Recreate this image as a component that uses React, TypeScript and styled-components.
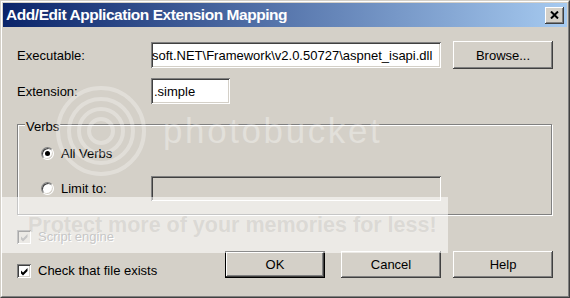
import React from "react";
import styled, { createGlobalStyle, css } from "styled-components";

const GlobalStyle = createGlobalStyle`
  html, body { margin: 0; padding: 0; background: #D4D0C8; }
  * { box-sizing: border-box; }
`;

const UI_FONT = `"Liberation Sans", Arial, sans-serif`;

const Window = styled.div`
  position: relative;
  width: 570px;
  height: 298px;
  background: #D4D0C8;
  border: 1px solid;
  border-color: #D4D0C8 #404040 #404040 #D4D0C8;
  font-family: ${UI_FONT};
  font-size: 13px;
  color: #000;
  overflow: hidden;
`;

const Frame = styled.div`
  height: 100%;
  border: 1px solid;
  border-color: #fff #808080 #808080 #fff;
  padding: 1px;
  display: flex;
  flex-direction: column;
`;

const TitleBar = styled.div`
  height: 24px;
  flex: none;
  display: flex;
  align-items: center;
  justify-content: space-between;
  padding: 0 3px 0 3px;
  background: linear-gradient(to right, #0A246A, #A6CAF0);
`;

const Title = styled.span`
  color: #fff;
  font-family: ${UI_FONT};
  font-weight: bold;
  font-size: 15.5px;
  letter-spacing: -0.45px;
  white-space: nowrap;
`;

const CaptionButton = styled.button`
  width: 19px;
  height: 17px;
  padding: 0;
  border: none;
  background: #D4D0C8;
  display: flex;
  align-items: center;
  justify-content: center;
  box-shadow: inset -1px -1px #404040, inset 1px 1px #fff, inset -2px -2px #808080, inset 2px 2px #D4D0C8;
`;

const Content = styled.div`
  flex: 1;
  padding: 14px 14px 0 14px;
  display: flex;
  flex-direction: column;
`;

const FormGrid = styled.div`
  display: grid;
  grid-template-columns: 122px 290px 100px;
  grid-template-rows: 28px 26px;
  column-gap: 12px;
  row-gap: 9px;
  align-items: center;
`;

const Label = styled.span<{ $disabled?: boolean }>`
  font-size: 13px;
  white-space: nowrap;
  ${(p) =>
    p.$disabled &&
    css`
      color: #808080;
      text-shadow: 1px 1px 0 #fff;
    `}
`;

const TextField = styled.div<{ $width?: number; $disabled?: boolean; $clip?: boolean; $h?: number }>`
  width: ${(p) => (p.$width ? `${p.$width}px` : "100%")};
  height: ${(p) => p.$h ?? 26}px;
  display: flex;
  align-items: center;
  padding: 0 0 0 ${(p) => (p.$clip ? "1px" : "3px")};
  background: ${(p) => (p.$disabled ? "#D4D0C8" : "#fff")};
  box-shadow: inset 1px 1px #808080, inset -1px -1px #fff, inset 2px 2px #404040, inset -2px -2px #D4D0C8;
  white-space: nowrap;
  overflow: hidden;
  font-size: 13px;
`;

const Button = styled.button<{ $default?: boolean; $h?: number }>`
  width: 100px;
  height: ${(p) => p.$h ?? 27}px;
  padding: 0;
  border: none;
  background: #D4D0C8;
  font-family: ${UI_FONT};
  font-size: 13px;
  color: #000;
  box-shadow: inset -1px -1px #404040, inset 1px 1px #fff, inset -2px -2px #808080, inset 2px 2px #D4D0C8;
  ${(p) =>
    p.$default &&
    css`
      box-shadow: inset -1px -1px #000, inset 1px 1px #000, inset -2px -2px #404040, inset 2px 2px #fff,
        inset -3px -3px #808080;
    `}
`;

const GroupBox = styled.div`
  position: relative;
  margin-top: 20px;
  width: 535px;
  height: 91px;
  border: 1px solid #808080;
  box-shadow: inset 1px 1px #fff, 1px 1px 0 #fff;
  padding: 18px 0 0 23px;
  display: grid;
  grid-template-columns: 110px 290px;
  grid-template-rows: 20px 25px;
  row-gap: 13px;
  align-items: center;
`;

const Legend = styled.span`
  position: absolute;
  top: -6px;
  left: 7px;
  padding: 0 1px;
  background: #D4D0C8;
  line-height: 15px;
`;

const Option = styled.label`
  display: flex;
  align-items: center;
  gap: 7px;
  white-space: nowrap;
`;

const Radio = styled.span<{ $checked?: boolean }>`
  position: relative;
  width: 13px;
  height: 13px;
  flex: none;
  border-radius: 50%;
  background: #fff;
  border: 1px solid;
  border-color: #808080 #fff #fff #808080;
  box-shadow: inset 1px 1px #404040, inset -1px -1px #D4D0C8;
  ${(p) =>
    p.$checked &&
    css`
      &::after {
        content: "";
        position: absolute;
        left: 3px;
        top: 3px;
        width: 5px;
        height: 5px;
        border-radius: 50%;
        background: #000;
      }
    `}
`;

const CheckBox = styled.span<{ $disabled?: boolean }>`
  width: 14px;
  height: 14px;
  flex: none;
  display: block;
  background: ${(p) => (p.$disabled ? "#D4D0C8" : "#fff")};
  box-shadow: inset 1px 1px #808080, inset -1px -1px #fff, inset 2px 2px #404040, inset -2px -2px #D4D0C8;
`;

const Footer = styled.div`
  display: flex;
  margin-top: 14px;
`;

const CheckColumn = styled.div`
  display: flex;
  flex-direction: column;
  gap: 19px;
`;

const ButtonRow = styled.div`
  margin-left: auto;
  margin-top: 22px;
  display: flex;
  gap: 12px;
  align-items: flex-start;
`;

const DefaultSpacer = styled.div`
  display: flex;
  gap: 16px;
`;

/* Watermark overlay */
const Watermark = styled.div`
  position: absolute;
  inset: 0;
  pointer-events: none;
`;

const Band = styled.div`
  position: absolute;
  left: 0;
  top: 196px;
  width: 447px;
  height: 56px;
  background: rgba(255, 255, 255, 0.55);
`;

const LogoRings = styled.svg`
  position: absolute;
  left: 48px;
  top: 78px;
`;

const LogoText = styled.div`
  position: absolute;
  left: 162px;
  top: 110px;
  font-family: ${UI_FONT};
  font-size: 35px;
  letter-spacing: 2.6px;
  line-height: 40px;
  color: rgba(255, 255, 255, 0.34);
`;

const Slogan = styled.div`
  position: absolute;
  left: 27px;
  top: 213px;
  font-family: ${UI_FONT};
  font-weight: bold;
  font-size: 21.5px;
  line-height: 22px;
  color: rgba(150, 146, 140, 0.2);
  white-space: nowrap;
`;

const Check = ({ color }: { color: string }) => (
  <svg width="14" height="14" viewBox="0 0 14 14">
    <path d="M4 6.5 L6 8.5 L10.5 4 L10.5 7 L6 11.5 L4 9.5 Z" fill={color} />
  </svg>
);

export default function App() {
  return (
    <>
      <GlobalStyle />
      <Window>
        <Frame>
          <TitleBar>
            <Title>Add/Edit Application Extension Mapping</Title>
            <CaptionButton aria-label="Close">
              <svg width="9" height="8" viewBox="0 0 9 8">
                <path d="M1 0.5 L8 7.5 M8 0.5 L1 7.5" stroke="#000" strokeWidth="2" />
              </svg>
            </CaptionButton>
          </TitleBar>
          <Content>
            <FormGrid>
              <Label>Executable:</Label>
              <TextField $clip>soft.NET\Framework\v2.0.50727\aspnet_isapi.dll</TextField>
              <Button $h={28}>Browse...</Button>
              <Label>Extension:</Label>
              <TextField $width={79}>.simple</TextField>
              <span />
            </FormGrid>
            <GroupBox>
              <Legend>Verbs</Legend>
              <Option>
                <Radio $checked />
                All Verbs
              </Option>
              <span />
              <Option>
                <Radio />
                Limit to:
              </Option>
              <TextField $disabled $h={25} />
            </GroupBox>
            <Footer>
              <CheckColumn>
                <Option>
                  <CheckBox $disabled>
                    <Check color="#808080" />
                  </CheckBox>
                  <Label $disabled>Script engine</Label>
                </Option>
                <Option>
                  <CheckBox>
                    <Check color="#000" />
                  </CheckBox>
                  <Label>Check that file exists</Label>
                </Option>
              </CheckColumn>
              <ButtonRow>
                <DefaultSpacer>
                  <Button $default>OK</Button>
                  <Button>Cancel</Button>
                </DefaultSpacer>
                <Button>Help</Button>
              </ButtonRow>
            </Footer>
          </Content>
        </Frame>
        <Watermark>
          <LogoRings width="104" height="104" viewBox="0 0 104 104">
            {[12, 22, 32, 43].map((r) => (
              <circle key={r} cx="52" cy="52" r={r} fill="none" stroke="rgba(255,255,255,0.3)" strokeWidth="4" />
            ))}
          </LogoRings>
          <LogoText>photobucket</LogoText>
          <Band />
          <Slogan>Protect more of your memories for less!</Slogan>
        </Watermark>
      </Window>
    </>
  );
}
